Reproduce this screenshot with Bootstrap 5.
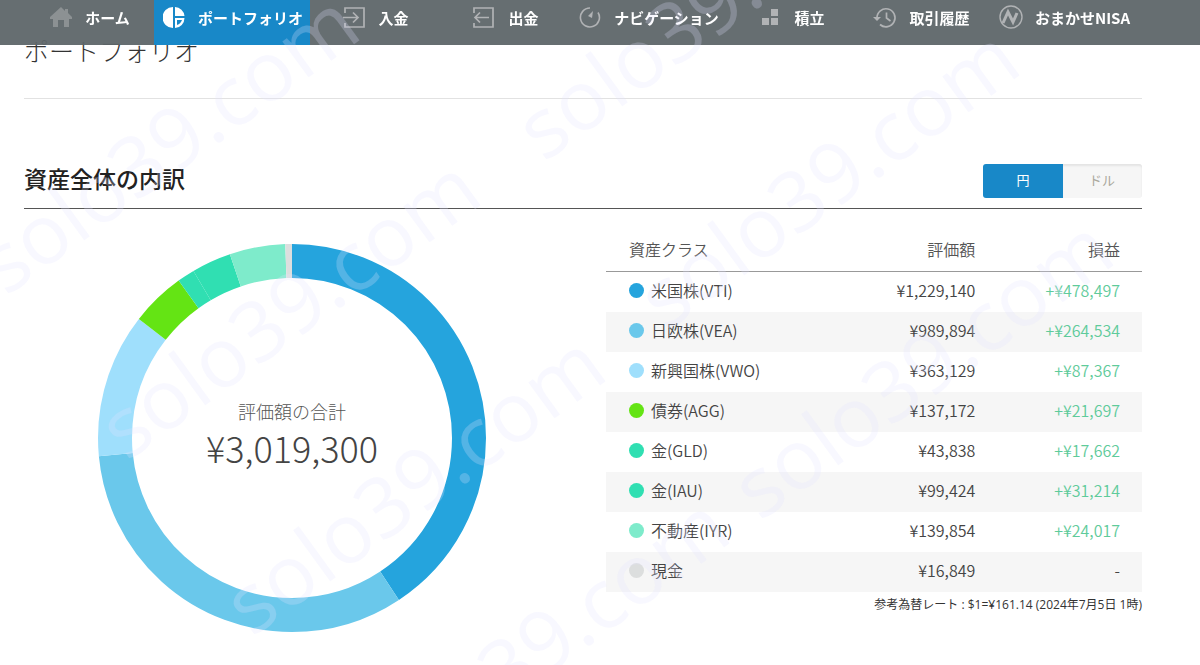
<!DOCTYPE html>
<html lang="ja">
<head>
<meta charset="utf-8">
<meta name="viewport" content="width=device-width, initial-scale=1">
<title>ポートフォリオ</title>
<link href="https://cdn.jsdelivr.net/npm/bootstrap@5.3.0/dist/css/bootstrap.min.css" rel="stylesheet">
<style>
body { font-family: "Noto Sans CJK JP", sans-serif; color: #333; background: #fff; }
.page-gutter { padding-left: 24px; padding-right: 58px; }
.main-bar { background: rgba(94, 102, 105, .95); height: 45px; }
.main-bar li { flex: 5 1 0; }
.main-bar li.wide-item { flex-grow: 6; }
.main-bar .nav-link { color: #fff; font-size: 15px; line-height: 20px; font-weight: 700; gap: 13px; padding: 8px 0 0 2px; height: 45px; white-space: nowrap; }
.main-bar .nav-link.active { background: #1888c8; }
.main-bar svg { width: 22px; height: 22px; color: #b1b3b5; flex: none; margin-top: -1px; }
.main-bar .active svg { color: #fff; }
.page-title { font-size: 25px; line-height: 36px; font-weight: 300; padding: 32px 0 30px; border-bottom: 1px solid #e2e2e2; }
.section-head { margin-top: 63px; padding-bottom: 10px; border-bottom: 1px solid #555; }
.section-head h2 { font-size: 23px; line-height: 32px; font-weight: 500; color: #222; padding-bottom: 4px; }
.currency .btn { width: 80px; height: 34px; padding: 0 0 2px; font-size: 13px; border: 0; border-radius: 3px; background: #f6f6f6; color: #aaa89c; box-shadow: inset 0 2px 2px #e4e4e4; }
.currency .btn.active { background: #1888c8; color: #fff; box-shadow: none; }
.breakdown { --bs-gutter-x: 46px; }
.donut-box { max-width: 388px; margin-top: 35px; }
.donut-total { font-weight: 300; padding-bottom: 8px; }
.total-label { font-size: 18px; line-height: 26px; color: #555; }
.total-value { font-size: 36px; line-height: 46px; color: #444; }
.asset-table { margin-top: 19px; font-size: 16px; line-height: 24px; font-weight: 350; }
.asset-table > :not(caption) > * > * { padding: 6px 22px 10px 0; border: 0; color: #444; }
.asset-table th { font-weight: 350; }
.asset-table tr > :first-child { padding-left: 23px; }
.asset-table thead th { padding-top: 9px; padding-bottom: 10px; border-bottom: 1px solid #999; color: #555; }
.asset-table tbody tr:nth-child(even) > * { background: #f6f6f6; }
.asset-table tbody .gain { color: #5fcb9b; }
.asset-table .gain-col { width: 27%; }
.swatch { width: 15px; height: 15px; }
.legend { gap: 7px; }
.rate { font-family: "Open Sans", "Noto Sans CJK JP", sans-serif; font-size: 12px; line-height: 18px; margin-top: 4px; }
.watermark { inset: 0; z-index: 2000; overflow: hidden; pointer-events: none; }
.watermark text { font: 500 83px "Open Sans", sans-serif; fill: #e4e4ff; fill-opacity: .25; }
</style>
</head>
<body>
<nav class="main-bar fixed-top page-gutter" aria-label="メイン">
<ul class="nav flex-nowrap">
<li><a class="nav-link d-flex align-items-start justify-content-center" href="#"><svg viewBox="0 0 22 22" fill="currentColor" opacity=".5"><path d="M11 0 0 10v2h3v8h5v-7h6v7h5v-8h3v-2l-4-4V2h-3v2z"/></svg>ホーム</a></li>
<li class="wide-item"><a class="nav-link active d-flex align-items-start justify-content-center" href="#" aria-current="page"><svg viewBox="0 0 22 22" fill="currentColor"><path d="M10 0v21A10.500 10.500 0 0 1 10 0zM12 0a10 10 0 0 1 9.500 9H12zM12 11h9.500a10 10 0 0 1-9.500 10zm2 2v5c2.500-.8 4-2.500 5-5z" fill-rule="evenodd"/></svg>ポートフォリオ</a></li>
<li><a class="nav-link d-flex align-items-start justify-content-center" href="#"><svg viewBox="0 0 22 22" fill="none" stroke="currentColor" stroke-width="1.700"><path d="M2 6V1h19v19H2v-4M0 10.500h15M10 5.500l5 5-5 5"/></svg>入金</a></li>
<li><a class="nav-link d-flex align-items-start justify-content-center" href="#"><svg viewBox="0 0 22 22" fill="none" stroke="currentColor" stroke-width="1.700"><path d="M1 6V1h19v19H1v-4M16 10.500H2M7 5.500l-5 5 5 5"/></svg>出金</a></li>
<li class="wide-item"><a class="nav-link d-flex align-items-start justify-content-center" href="#"><svg viewBox="0 0 22 22" fill="none" stroke="currentColor" stroke-width="1.600"><path d="M11 1A9.500 9.500 0 1 0 19 5.500"/><path d="m14 4-1 7-4-2z" fill="currentColor" stroke="none"/></svg>ナビゲーション</a></li>
<li><a class="nav-link d-flex align-items-start justify-content-center" href="#"><svg viewBox="0 0 22 22" fill="currentColor"><path d="M12 2h7v7h-7zM3 11h7v7H3zM12 11h7v7h-7z"/></svg>積立</a></li>
<li><a class="nav-link d-flex align-items-start justify-content-center" href="#"><svg viewBox="0 0 22 22" fill="none" stroke="currentColor" stroke-width="1.700" overflow="visible"><path d="M3 11a9 9 0 1 1 3 6.500M12.500 5.500V11l4 3"/><path d="M-1 10h8l-4 4z" fill="currentColor" stroke="none"/></svg>取引履歴</a></li>
<li class="wide-item"><a class="nav-link d-flex align-items-start justify-content-center" href="#"><svg viewBox="0 0 22 22" fill="none" stroke="currentColor" overflow="visible"><circle cx="11" cy="10" r="11" stroke-width="1.400"/><path d="M3 16 8 5l5 10 4-9" stroke-width="3"/></svg>おまかせNISA</a></li>
</ul>
</nav>

<main class="page-gutter">
<h1 class="page-title m-0">ポートフォリオ</h1>
<section>
<div class="section-head d-flex justify-content-between align-items-end">
<h2 class="m-0">資産全体の内訳</h2>
<div class="currency btn-group" role="group" aria-label="通貨">
<button type="button" class="btn active">円</button>
<button type="button" class="btn">ドル</button>
</div>
</div>
<div class="row breakdown">
<div class="col-6">
<div class="donut-box position-relative mx-auto">
<svg class="d-block w-100" viewBox="0 0 388 388" role="img" aria-label="資産の割合">
<g fill="none" stroke-width="34" transform="rotate(-90 194 194)">
<circle cx="194" cy="194" r="177" pathLength="3019300" stroke="#25a4dd" stroke-dasharray="1229140 3019300"/>
<circle cx="194" cy="194" r="177" pathLength="3019300" stroke="#6ac8eb" stroke-dasharray="989894 3019300" stroke-dashoffset="-1229140"/>
<circle cx="194" cy="194" r="177" pathLength="3019300" stroke="#9fdffc" stroke-dasharray="363129 3019300" stroke-dashoffset="-2219034"/>
<circle cx="194" cy="194" r="177" pathLength="3019300" stroke="#64e414" stroke-dasharray="137172 3019300" stroke-dashoffset="-2582163"/>
<circle cx="194" cy="194" r="177" pathLength="3019300" stroke="#30dfb2" stroke-dasharray="43838 3019300" stroke-dashoffset="-2719335"/>
<circle cx="194" cy="194" r="177" pathLength="3019300" stroke="#30dfb2" stroke-dasharray="99424 3019300" stroke-dashoffset="-2763173"/>
<circle cx="194" cy="194" r="177" pathLength="3019300" stroke="#7eebcb" stroke-dasharray="139854 3019300" stroke-dashoffset="-2862597"/>
<circle cx="194" cy="194" r="177" pathLength="3019300" stroke="#dcdede" stroke-dasharray="16849 3019300" stroke-dashoffset="-3002451"/>
</g>
</svg>
<div class="donut-total position-absolute top-50 start-50 translate-middle text-center">
<div class="total-label">評価額の合計</div>
<div class="total-value">¥3,019,300</div>
</div>
</div>
</div>
<div class="col-6">
<table class="table asset-table mb-0">
<thead><tr><th scope="col">資産クラス</th><th scope="col" class="text-end">評価額</th><th scope="col" class="text-end gain-col">損益</th></tr></thead>
<tbody>
<tr><th scope="row"><span class="legend d-flex align-items-center"><span class="swatch rounded-circle" style="background:#25a4dd"></span>米国株(VTI)</span></th><td class="text-end">¥1,229,140</td><td class="text-end gain">+¥478,497</td></tr>
<tr><th scope="row"><span class="legend d-flex align-items-center"><span class="swatch rounded-circle" style="background:#6ac8eb"></span>日欧株(VEA)</span></th><td class="text-end">¥989,894</td><td class="text-end gain">+¥264,534</td></tr>
<tr><th scope="row"><span class="legend d-flex align-items-center"><span class="swatch rounded-circle" style="background:#9fdffc"></span>新興国株(VWO)</span></th><td class="text-end">¥363,129</td><td class="text-end gain">+¥87,367</td></tr>
<tr><th scope="row"><span class="legend d-flex align-items-center"><span class="swatch rounded-circle" style="background:#64e414"></span>債券(AGG)</span></th><td class="text-end">¥137,172</td><td class="text-end gain">+¥21,697</td></tr>
<tr><th scope="row"><span class="legend d-flex align-items-center"><span class="swatch rounded-circle" style="background:#30dfb2"></span>金(GLD)</span></th><td class="text-end">¥43,838</td><td class="text-end gain">+¥17,662</td></tr>
<tr><th scope="row"><span class="legend d-flex align-items-center"><span class="swatch rounded-circle" style="background:#30dfb2"></span>金(IAU)</span></th><td class="text-end">¥99,424</td><td class="text-end gain">+¥31,214</td></tr>
<tr><th scope="row"><span class="legend d-flex align-items-center"><span class="swatch rounded-circle" style="background:#7eebcb"></span>不動産(IYR)</span></th><td class="text-end">¥139,854</td><td class="text-end gain">+¥24,017</td></tr>
<tr><th scope="row"><span class="legend d-flex align-items-center"><span class="swatch rounded-circle" style="background:#dcdede"></span>現金</span></th><td class="text-end">¥16,849</td><td class="text-end">-</td></tr>
</tbody>
</table>
<p class="rate text-end mb-0">参考為替レート : $1=¥161.14 (2024年7月5日 1時)</p>
</div>
</div>
</section>
</main>

<svg class="watermark position-fixed w-100 h-100" aria-hidden="true">
<text transform="translate(6 297) rotate(-36)">solo39.com</text>
<text transform="translate(127 462) rotate(-36)">solo39.com</text>
<text transform="translate(252 638) rotate(-36)">solo39.com</text>
<text transform="translate(376 800) rotate(-36)">solo39.com</text>
<text transform="translate(544 163) rotate(-36)">solo39.com</text>
<text transform="translate(666 332) rotate(-36)">solo39.com</text>
<text transform="translate(760 522) rotate(-36)">solo39.com</text>
</svg>
<script src="https://cdn.jsdelivr.net/npm/bootstrap@5.3.0/dist/js/bootstrap.bundle.min.js"></script>
</body>
</html>
